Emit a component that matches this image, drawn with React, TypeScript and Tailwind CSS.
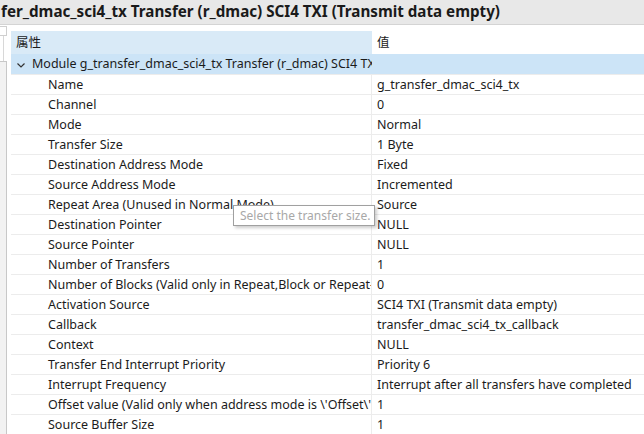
import React from "react";

const rows: [string, string][] = [
  ["Name", "g_transfer_dmac_sci4_tx"],
  ["Channel", "0"],
  ["Mode", "Normal"],
  ["Transfer Size", "1 Byte"],
  ["Destination Address Mode", "Fixed"],
  ["Source Address Mode", "Incremented"],
  ["Repeat Area (Unused in Normal Mode)", "Source"],
  ["Destination Pointer", "NULL"],
  ["Source Pointer", "NULL"],
  ["Number of Transfers", "1"],
  ["Number of Blocks (Valid only in Repeat,Block or Repeat-Block Mode)", "0"],
  ["Activation Source", "SCI4 TXI (Transmit data empty)"],
  ["Callback", "transfer_dmac_sci4_tx_callback"],
  ["Context", "NULL"],
  ["Transfer End Interrupt Priority", "Priority 6"],
  ["Interrupt Frequency", "Interrupt after all transfers have completed"],
  ["Offset value (Valid only when address mode is \\'Offset\\')", "1"],
  ["Source Buffer Size", "1"],
];

export default function App() {
  return (
    <div
      className="w-[644px] h-[434px] overflow-hidden bg-white text-[#1b1b1b] relative"
      style={{ fontFamily: '"Noto Sans", "Noto Sans CJK SC", sans-serif' }}
    >
      <div className="h-[24px] bg-[#e8e8e8] flex items-center whitespace-nowrap overflow-hidden">
        <span className="text-[15.2px] font-bold leading-none text-[#1a1a1a] pl-[1px]">
          fer_dmac_sci4_tx Transfer (r_dmac) SCI4 TXI (Transmit data empty)
        </span>
      </div>
      <div className="h-[1px] bg-[#d4d4d4]" />
      <div className="flex">
        <div className="w-[11px] shrink-0 flex flex-col">
          <div className="h-[1px]" />
          <div className="w-[7px] h-[10px] border border-[#cfcfcf] border-l-0 bg-white" />
          <div className="h-[25px] w-[4px] border-r border-[#d8d8d8]" />
          <div className="w-[7px] h-[380px] border border-[#c8c8c8] border-l-0 bg-[#f2f2f2]" />
        </div>
        <div className="flex-1 flex flex-col pt-[6px] min-w-0">
          <div className="flex h-[23px] text-[12.5px] items-center">
            <div className="w-[361px] shrink-0 h-full bg-[#d9eaf7] flex items-center pl-[5px] pt-[1px]">属性</div>
            <div className="flex-1 h-full flex items-center pl-[5px] pt-[1px]">值</div>
          </div>
          <div className="flex h-[20px] bg-[#cce4f7] text-[12.5px] items-center pt-[1px]">
            <div className="w-[361px] shrink-0 flex items-center overflow-hidden whitespace-nowrap pl-[5px]">
              <svg width="10" height="10" viewBox="0 0 10 10" className="mr-[6px] shrink-0">
                <path d="M1.5 3.5 L5 7 L8.5 3.5" fill="none" stroke="#333" strokeWidth="1.2" />
              </svg>
              Module g_transfer_dmac_sci4_tx Transfer (r_dmac) SCI4 TXI (Transmit data empty)
            </div>
          </div>
          {rows.map(([k, v], i) => (
            <div key={i} className="flex h-[20px] text-[12.5px] border-t border-[#ececec]">
              <div className="w-[361px] shrink-0 pl-[37px] pt-[1px] flex items-center overflow-hidden whitespace-nowrap border-r border-[#ececec]">
                {k}
              </div>
              <div className="flex-1 pl-[5px] pt-[1px] flex items-center whitespace-nowrap overflow-hidden">{v}</div>
            </div>
          ))}
        </div>
      </div>
      <div className="absolute left-[233px] top-[205px] h-[21px] pl-[6px] pr-[4px] flex items-center bg-white border border-[#a0a0a0] shadow-[2px_2px_3px_rgba(0,0,0,0.2)] text-[12px] text-[#a8a8a8] whitespace-nowrap">
        Select the transfer size.
      </div>
    </div>
  );
}
